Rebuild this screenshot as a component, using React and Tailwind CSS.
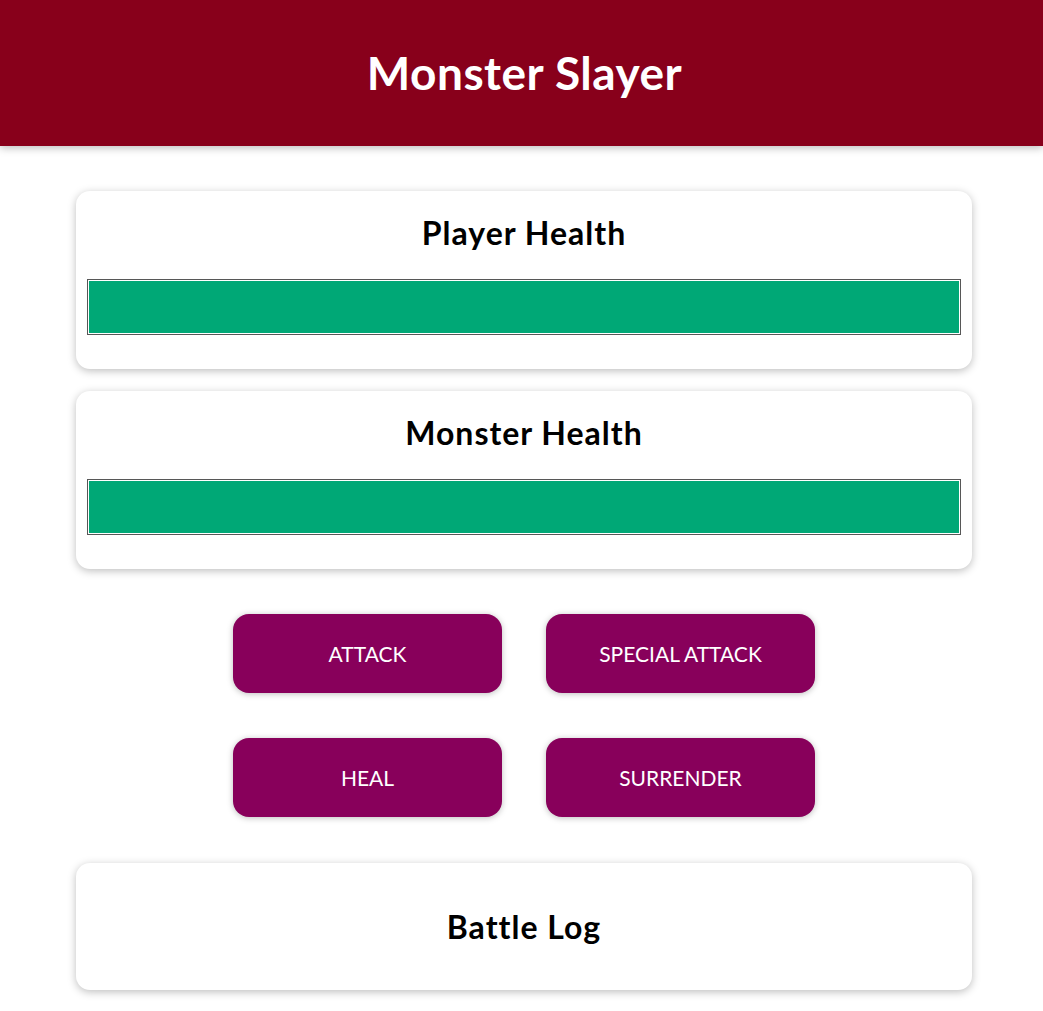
import React from 'react';

const HealthCard = ({ title, value }) => (
  <section className="bg-white rounded-[14px] shadow-[0_2px_8px_rgba(0,0,0,0.26)] px-[11px] pt-[22px] pb-[34px] text-center">
    <h2 className="text-[32px] leading-[40px] font-bold tracking-[1px] text-black mb-[26px]">{title}</h2>
    <div className="h-[56px] border border-[#575757] p-px bg-white">
      <div className="h-full bg-[#00a876]" style={{ width: `${value}%` }} />
    </div>
  </section>
);

const buttons = ['Attack', 'Special Attack', 'Heal', 'Surrender'];

export default function App() {
  return (
    <div className="min-h-screen bg-white" style={{ fontFamily: 'Lato, "Open Sans", sans-serif' }}>
      <header className="h-[146px] bg-[#88001b] flex items-center justify-center shadow-[0_2px_8px_rgba(0,0,0,0.26)]">
        <h1 className="text-[46px] font-bold tracking-[0.5px] text-white leading-none pl-[6px]">Monster Slayer</h1>
      </header>

      <main className="w-[896px] ml-[76px] pt-[45px] flex flex-col">
        <div className="flex flex-col gap-[22px]">
          <HealthCard title="Player Health" value={100} />
          <HealthCard title="Monster Health" value={100} />
        </div>

        <div className="grid grid-cols-[269px_269px] justify-center gap-x-[44px] gap-y-[45px] mt-[45px]">
          {buttons.map((b) => (
            <button
              key={b}
              className="h-[79px] rounded-[16px] bg-[#88005b] text-white text-[21px] uppercase shadow-[0_1px_6px_rgba(0,0,0,0.26)]"
            >
              {b}
            </button>
          ))}
        </div>

        <section className="mt-[46px] bg-white rounded-[14px] shadow-[0_2px_8px_rgba(0,0,0,0.26)] h-[127px] flex items-center justify-center">
          <h2 className="text-[32px] font-bold tracking-[1px] text-black">Battle Log</h2>
        </section>
      </main>
    </div>
  );
}
